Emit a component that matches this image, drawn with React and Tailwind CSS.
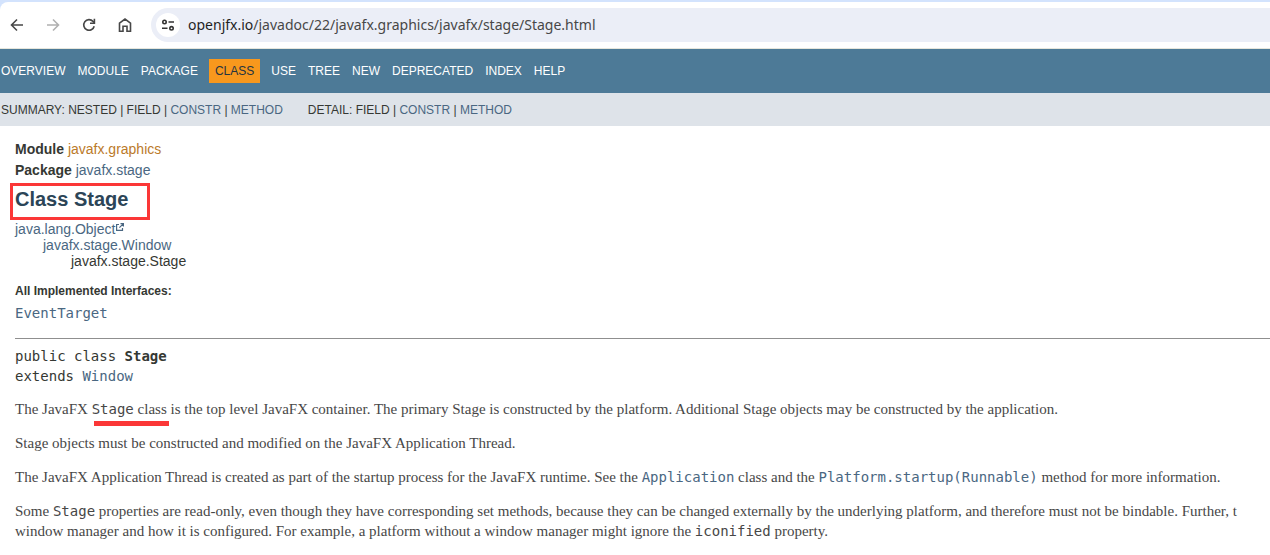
const NAV_BEFORE = ['OVERVIEW', 'MODULE', 'PACKAGE'];
const NAV_AFTER = ['USE', 'TREE', 'NEW', 'DEPRECATED', 'INDEX', 'HELP'];

function Link({ children, className = 'text-[#4a6782]' }) {
  return (
    <a href="#" className={className}>
      {children}
    </a>
  );
}

function Code({ children }) {
  return <code className="font-['DejaVu_Sans_Mono',monospace] text-sm leading-none">{children}</code>;
}

function IconButton({ label, children, className = 'text-[#474747]' }) {
  return (
    <button type="button" aria-label={label} className={`flex size-5 items-center justify-center ${className}`}>
      <svg viewBox="0 0 16 16" className="size-4" fill="none" stroke="currentColor" strokeWidth="1.6">
        {children}
      </svg>
    </button>
  );
}

function BrowserBar() {
  return (
    <div className="border-b border-[#e6e6dc] bg-[#d3e3fd] pt-0.5">
      <div className="flex h-[46px] items-center rounded-tl-lg bg-white pl-[7px]">
        <div className="flex gap-4">
          <IconButton label="Back">
            <path d="M14 8H3M8 2.5 2.5 8 8 13.5" />
          </IconButton>
          <IconButton label="Forward" className="text-[#b0b0b0]">
            <path d="M2 8h11M8 2.5 13.5 8 8 13.5" />
          </IconButton>
          <IconButton label="Reload">
            <path d="M13.2 9.2A5.3 5.3 0 1 1 12 4.4l1.4 1.4" />
            <path d="M13.4 1.8v4.4H9" />
          </IconButton>
          <IconButton label="Home">
            <path d="M2.500 14.2V6.2L8 2l5.500 4.2v8H10V9.200H6v5z" />
          </IconButton>
        </div>
        <div className="ml-4 flex h-[34px] min-w-0 flex-1 items-center rounded-l-full bg-[#ebeef7] pl-[5px]">
          <button
            type="button"
            aria-label="View site information"
            className="flex size-6 shrink-0 items-center justify-center rounded-full bg-white text-[#333]"
          >
            <svg viewBox="0 0 14 14" className="size-3.5" fill="none" stroke="currentColor" strokeWidth="1.6">
              <circle cx="3.500" cy="4" r="1.700" />
              <path d="M7.500 4h5.500M1 10.300h5.500" />
              <circle cx="10.500" cy="10.300" r="1.700" />
            </svg>
          </button>
          <div className="ml-2 font-['Noto_Sans',sans-serif] text-sm whitespace-nowrap text-[#474747]">
            <span className="text-[#1f1f1f]">openjfx.io</span>/javadoc/22/javafx.graphics/javafx/stage/Stage.html
          </div>
        </div>
      </div>
    </div>
  );
}

function TopNav() {
  return (
    <nav className="flex h-11 items-center gap-3 bg-[#4d7a97] pl-px text-xs text-white">
      {NAV_BEFORE.map((name) => (
        <Link key={name} className="text-white">{name}</Link>
      ))}
      <span className="-mr-px -ml-px bg-[#f8981d] px-1.5 py-1 text-[#253441]">CLASS</span>
      {NAV_AFTER.map((name) => (
        <Link key={name} className="text-white">{name}</Link>
      ))}
    </nav>
  );
}

function SubNav() {
  return (
    <div className="flex h-[33px] items-center gap-[25px] bg-[#dee3e9] pl-px text-xs text-[#353833]">
      <div>
        SUMMARY: NESTED | FIELD | <Link>CONSTR</Link> | <Link>METHOD</Link>
      </div>
      <div>
        DETAIL: FIELD | <Link>CONSTR</Link> | <Link>METHOD</Link>
      </div>
    </div>
  );
}

function ExternalMark() {
  return (
    <svg viewBox="0 0 8 8" className="mb-1.5 ml-px inline size-2" fill="none" stroke="#4a6782" strokeWidth="1.2">
      <path d="M3 1.500H.6v5.900h5.900V5M4.500.6h2.900v2.900M7.400.6l-4 4" />
    </svg>
  );
}

export default function App() {
  return (
    <div className="overflow-hidden bg-white font-['Liberation_Sans',Arial,sans-serif] text-sm text-[#353833]">
      <BrowserBar />
      <TopNav />
      <SubNav />
      <main className="pt-[13px] pl-[15px]">
        <div className="leading-[21px]">
          <div>
            <b>Module</b> <Link className="text-[#bb7a2a]">javafx.graphics</Link>
          </div>
          <div>
            <b>Package</b> <Link>javafx.stage</Link>
          </div>
        </div>
        <h1 className="mt-0.5 -ml-[5px] h-[37px] w-[140px] border-3 border-[#fb3737] pl-0.5 text-xl leading-[26px] font-bold text-[#2c4557]">
          Class Stage
        </h1>
        <div className="mt-px leading-4">
          <div>
            <Link>java.lang.Object<ExternalMark /></Link>
          </div>
          <div className="pl-7">
            <Link>javafx.stage.Window</Link>
          </div>
          <div className="pl-14">javafx.stage.Stage</div>
        </div>
        <dl className="mt-3.5">
          <dt className="text-xs leading-4 font-bold">All Implemented Interfaces:</dt>
          <dd className="mt-1 leading-5">
            <Link><Code>EventTarget</Code></Link>
          </dd>
        </dl>
        <hr className="mt-[15px] border-t border-[#8f8f8f]" />
        <div className="mt-[7px] font-['DejaVu_Sans_Mono',monospace] leading-5">
          <div>
            public class <b>Stage</b>
          </div>
          <div>
            extends <Link>Window</Link>
          </div>
        </div>
        <div className="mt-[13px] flex flex-col gap-3.5 pb-3.5 font-['Liberation_Serif',serif] text-[15px] leading-5 whitespace-nowrap text-[#474747]">
          <p>
            The JavaFX{' '}
            <span className="relative">
              <Code>Stage</Code> class
              <span className="absolute top-full left-0.5 mt-1 h-[5px] w-full bg-[#fb3737]" />
            </span>{' '}
            is the top level JavaFX container. The primary Stage is constructed by the platform. Additional Stage
            objects may be constructed by the application.
          </p>
          <p>Stage objects must be constructed and modified on the JavaFX Application Thread.</p>
          <p>
            The JavaFX Application Thread is created as part of the startup process for the JavaFX runtime. See the{' '}
            <Link><Code>Application</Code></Link> class and the <Link><Code>Platform.startup(Runnable)</Code></Link>{' '}
            method for more information.
          </p>
          <p>
            Some <Code>Stage</Code> properties are read-only, even though they have corresponding set methods, because
            they can be changed externally by the underlying platform, and therefore must not be bindable. Further, t
            <br />
            window manager and how it is configured. For example, a platform without a window manager might ignore the{' '}
            <Code>iconified</Code> property.
          </p>
        </div>
      </main>
    </div>
  );
}
